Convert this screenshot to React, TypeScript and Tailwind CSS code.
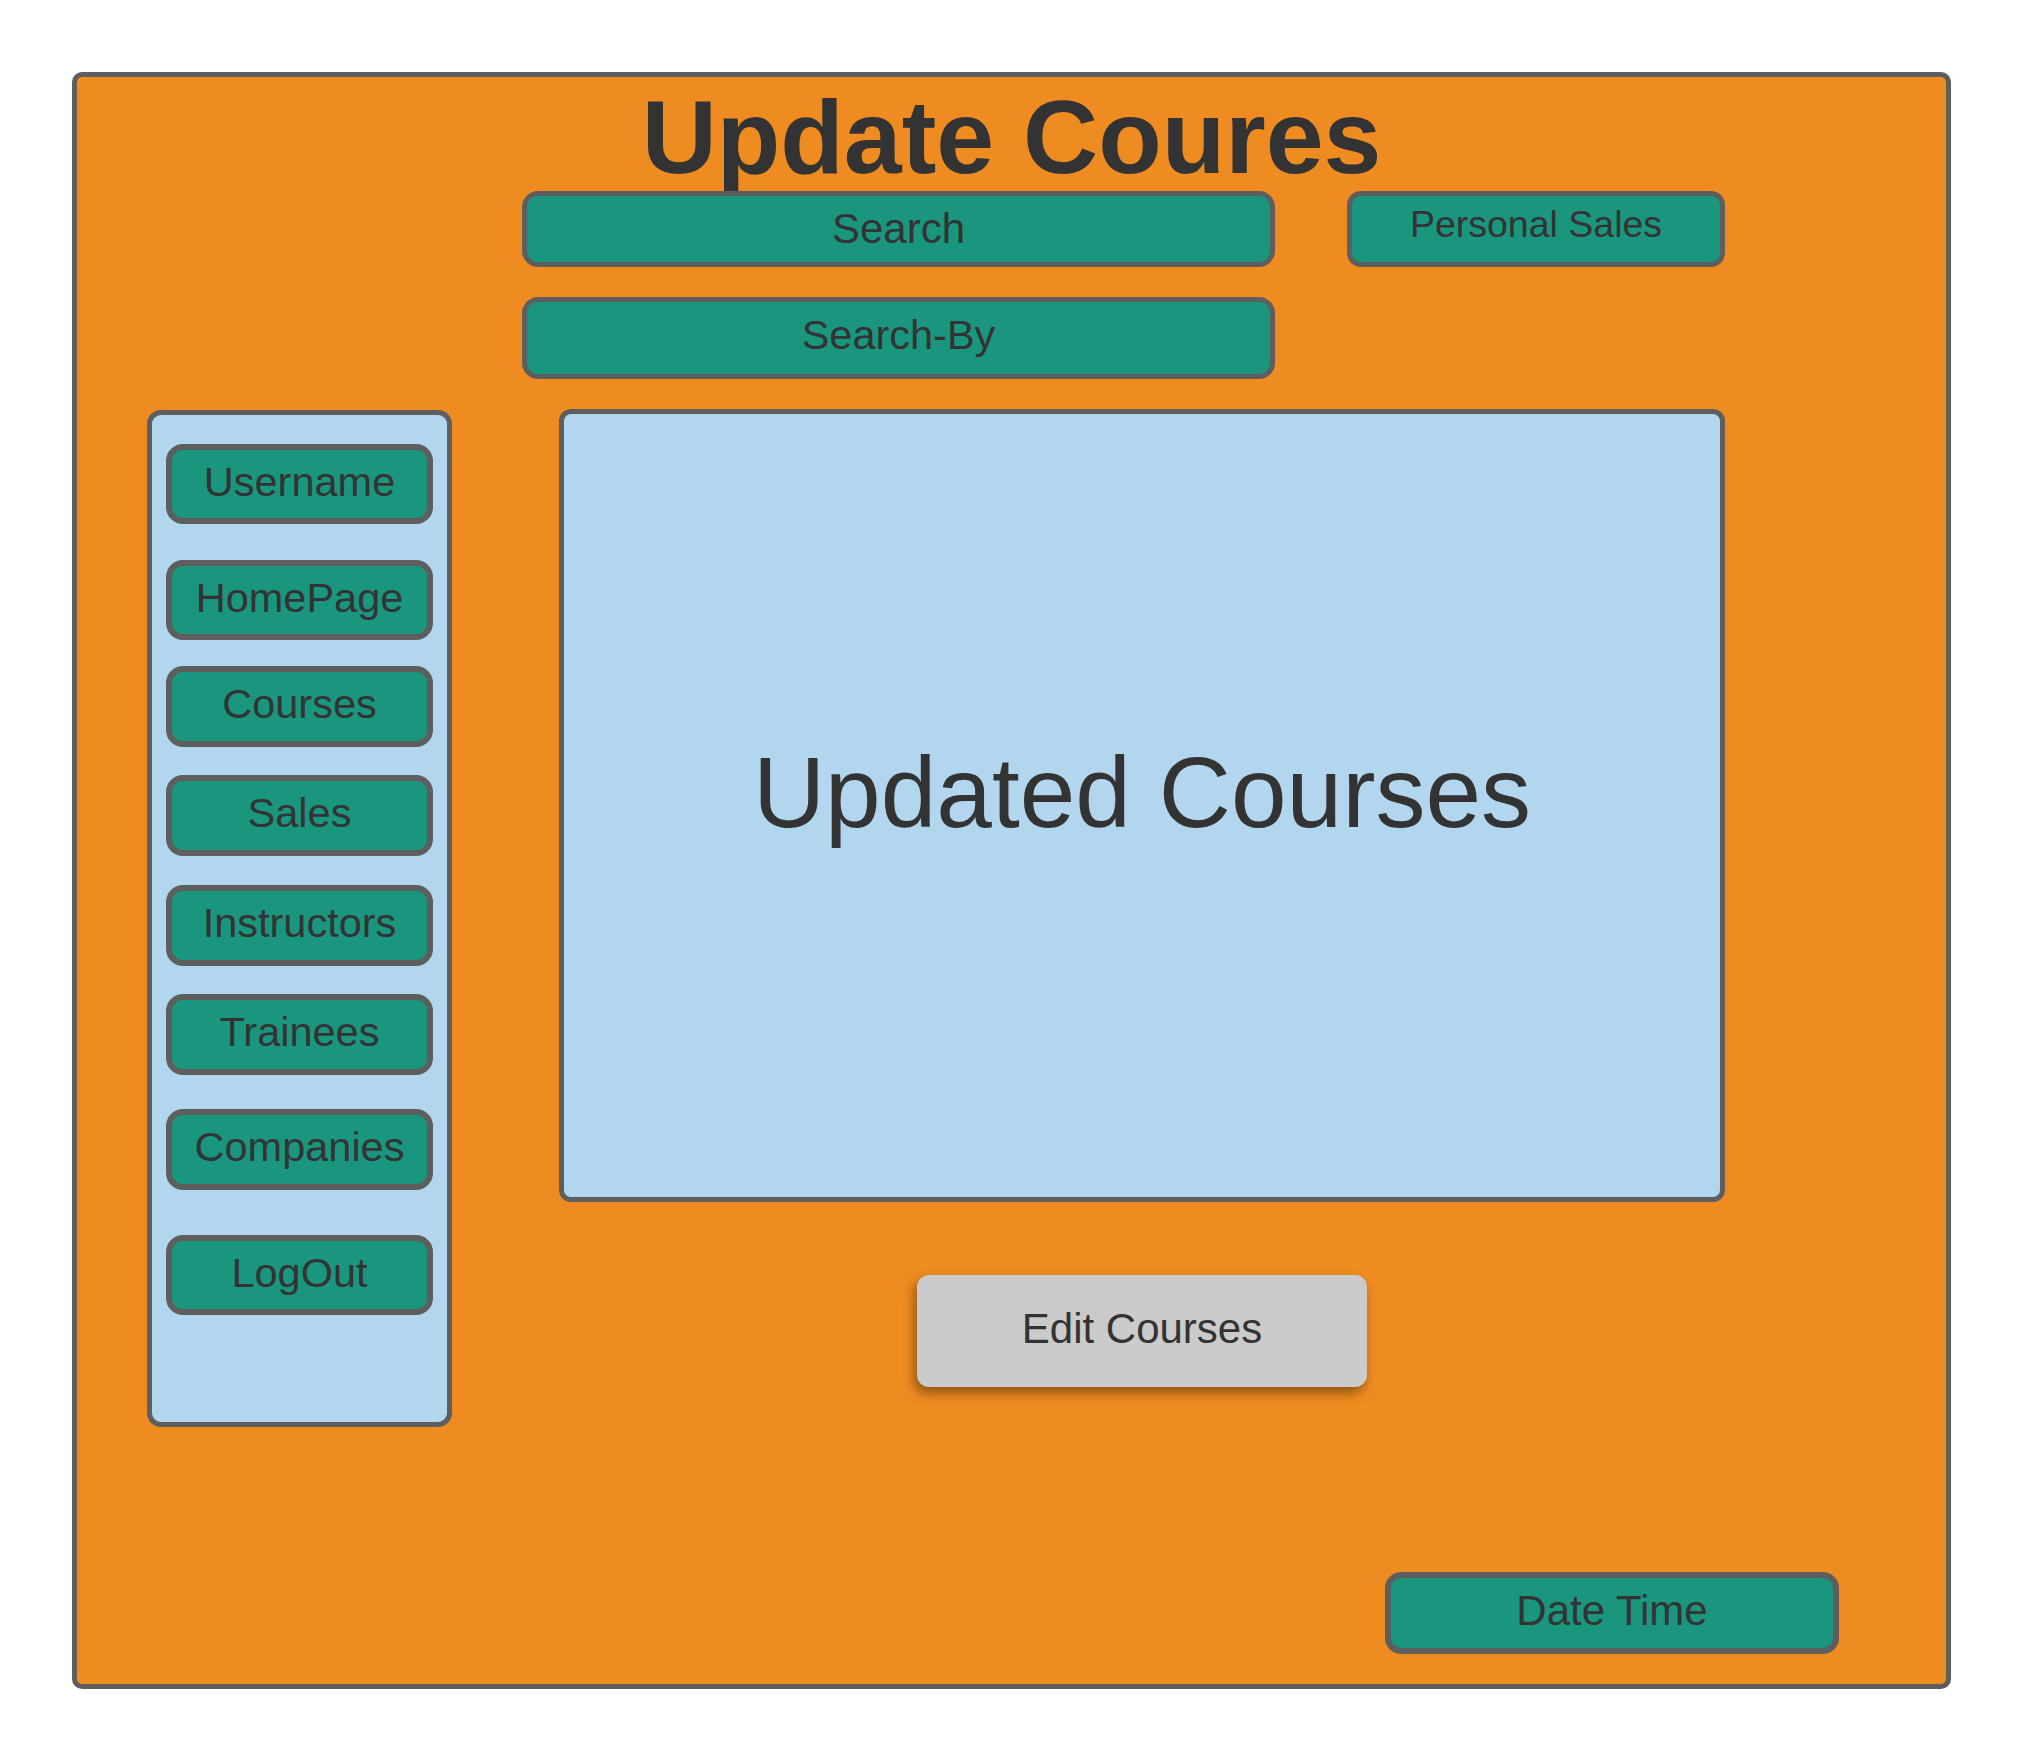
const font = { fontFamily: '"Liberation Sans", Arial, sans-serif' };

const navItems: { label: string; mt: string; h: string }[] = [
	{ label: "Username", mt: "mt-0", h: "h-[80px]" },
	{ label: "HomePage", mt: "mt-[36px]", h: "h-[80px]" },
	{ label: "Courses", mt: "mt-[26px]", h: "h-[81px]" },
	{ label: "Sales", mt: "mt-[28px]", h: "h-[81px]" },
	{ label: "Instructors", mt: "mt-[29px]", h: "h-[81px]" },
	{ label: "Trainees", mt: "mt-[28px]", h: "h-[81px]" },
	{ label: "Companies", mt: "mt-[34px]", h: "h-[81px]" },
	{ label: "LogOut", mt: "mt-[45px]", h: "h-[80px]" },
];

export default function App() {
	return (
		<div className="min-h-screen bg-white pt-[72px] pl-[72px] pb-[74px] text-[#333333]" style={font}>
			<div className="relative flex h-[1617px] w-[1879px] flex-col rounded-[10px] border-[5px] border-[#5e5e5e] bg-[#ef8c21]">
				{/* title */}
				<div className="mt-[8px] h-[106px] text-center text-[104px] font-bold leading-[104px] whitespace-nowrap">
					Update Coures
				</div>

				{/* search row */}
				<div className="relative flex pl-[445px]">
					<button
						type="button"
						className="flex h-[76px] w-[753px] items-center justify-center rounded-[16px] border-[5px] border-[#5e5e5e] bg-[#19967d] pb-[2px] text-[42px]"
					>
						Search
					</button>
					<button
						type="button"
						className="ml-[72px] flex h-[76px] w-[378px] items-center justify-center rounded-[14px] border-[5px] border-[#5e5e5e] bg-[#19967d] pb-[10px] text-[37.5px]"
					>
						Personal Sales
					</button>
				</div>

				<div className="mt-[30px] flex pl-[445px]">
					<button
						type="button"
						className="flex h-[82px] w-[753px] items-center justify-center rounded-[16px] border-[5px] border-[#5e5e5e] bg-[#19967d] pb-[6px] text-[41.5px]"
					>
						Search-By
					</button>
				</div>

				{/* body */}
				<div className="mt-[30px] flex items-start pl-[70px]">
					<aside className="mt-[1px] flex h-[1017px] w-[305px] flex-col rounded-[14px] border-[5px] border-[#5e5e5e] bg-[#b3d6ef] px-[14px] pt-[29px]">
						{navItems.map((item) => (
							<button
								key={item.label}
								type="button"
								className={`${item.mt} ${item.h} flex w-full items-center justify-center rounded-[17px] border-[6px] border-[#5e5e5e] bg-[#19967d] pb-[4px] text-[41.5px]`}
							>
								{item.label}
							</button>
						))}
					</aside>

					<div className="ml-[107px] flex flex-col items-center">
						<div className="flex h-[793px] w-[1166px] items-center justify-center rounded-[12px] border-[5px] border-[#5e5e5e] bg-[#b3d6ef] pb-[28px] text-[100px] whitespace-nowrap">
							Updated Courses
						</div>
						<button
							type="button"
							className="mt-[73px] flex h-[112px] w-[450px] items-center justify-center rounded-[12px] bg-[#cbcbcb] pb-[6px] text-[42px] shadow-[-3px_6px_12px_rgba(0,0,0,0.4)]"
						>
							Edit Courses
						</button>
					</div>
				</div>

				{/* footer */}
				<div className="flex pl-[1308px]">
					<div className="mt-[145px] flex h-[82px] w-[454px] items-center justify-center rounded-[16px] border-[6px] border-[#5e5e5e] bg-[#19967d] pb-[6px] text-[42px]">
						Date Time
					</div>
				</div>
			</div>
		</div>
	);
}
